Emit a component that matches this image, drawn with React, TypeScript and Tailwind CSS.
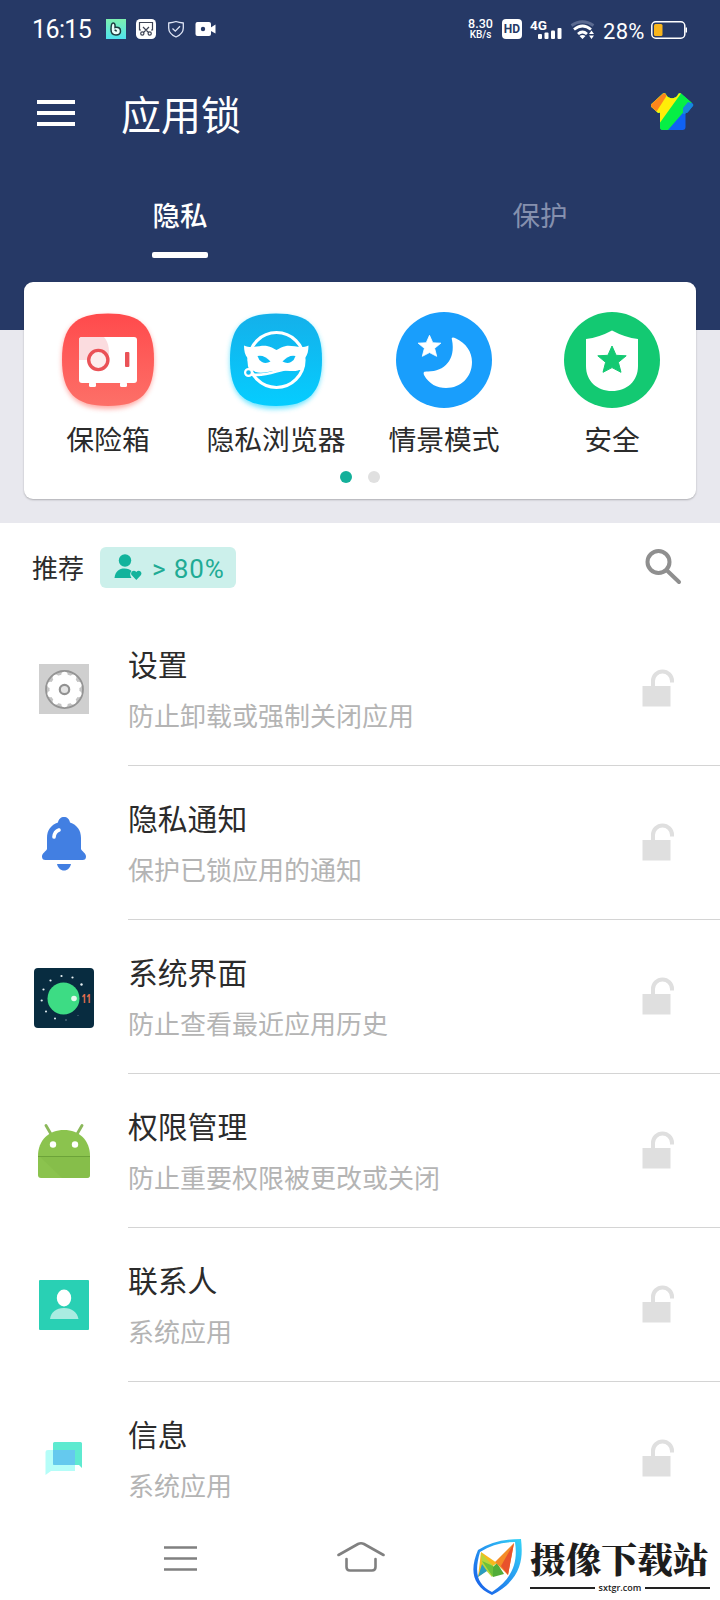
import type { ReactNode } from "react";

interface AppItem {
  title: string;
  desc: string;
  icon: ReactNode;
}

interface Feature {
  label: string;
  icon: ReactNode;
}

const StarShape = ({ fill }: { fill: string }) => (
  <path
    d="M0 -14 L4.1 -4.7 L14.2 -4.2 L6.4 2.3 L9 12.3 L0 7.6 L-9 12.3 L-6.4 2.3 L-14.2 -4.2 L-4.1 -4.7 Z"
    fill={fill}
    stroke={fill}
    strokeWidth="1"
    strokeLinejoin="round"
  />
);

const SafeIcon = () => (
  <svg viewBox="0 0 96 96" className="w-24 h-24 overflow-visible">
    <defs>
      <linearGradient id="safe" x1="0" y1="0" x2="0" y2="1">
        <stop offset="0" stopColor="#ff4a4c" />
        <stop offset="1" stopColor="#fd7068" />
      </linearGradient>
      <filter id="glow" x="-20%" y="-20%" width="140%" height="150%">
        <feGaussianBlur stdDeviation="2.5" />
      </filter>
    </defs>
    <path
      d="M48 4C81 4 94 17 94 49S81 97 48 97S2 82 2 49S15 4 48 4Z"
      fill="#ff8f88"
      opacity="0.75"
      filter="url(#glow)"
    />
    <path d="M48 1.5C81 1.5 94 14.5 94 47.5S81 94 48 94S2 80.5 2 47.5S15 1.5 48 1.5Z" fill="url(#safe)" />
    <rect x="19" y="25" width="58" height="46" rx="3" fill="#fff" />
    <path d="M22 25H44C49 31 50 39 48 48H19V28Q19 25 22 25Z" fill="#fbdcdf" />
    <rect x="29" y="70" width="7" height="5" rx="1.5" fill="#fff" />
    <rect x="60" y="70" width="7" height="5" rx="1.5" fill="#fff" />
    <circle cx="38.3" cy="48" r="9.6" fill="#fdeeee" stroke="#ea5257" strokeWidth="3.4" />
    <rect x="65" y="40" width="4.4" height="15" rx="1" fill="#ea5257" />
  </svg>
);

const MaskIcon = () => (
  <svg viewBox="0 0 96 96" className="w-24 h-24 overflow-visible">
    <defs>
      <linearGradient id="mask" x1="0" y1="0" x2="0" y2="1">
        <stop offset="0" stopColor="#14b0ea" />
        <stop offset="1" stopColor="#05cdff" />
      </linearGradient>
    </defs>
    <path
      d="M48 4C81 4 94 17 94 49S81 97 48 97S2 82 2 49S15 4 48 4Z"
      fill="#3ddcff"
      opacity="0.75"
      filter="url(#glow)"
    />
    <path d="M48 1.5C81 1.5 94 14.5 94 47.5S81 94 48 94S2 80.5 2 47.5S15 1.5 48 1.5Z" fill="url(#mask)" />
    <circle cx="48.5" cy="48" r="27.5" fill="none" stroke="#fff" strokeWidth="3.2" />
    <path
      d="M16 33.5C24 37 32 33 39 34C43 34.5 46 37 48.5 38C51 37 54 34.5 58 34C65 33 73 37 80.5 33.5C80.5 39 79.5 43 77 46C77 52 75 57 70 58.5C64 60 57 58 50 58.500C42 59 34 62 28 60C22 58 20 53 19.500 46C17 43 16 39 16 33.5Z"
      fill="#fff"
    />
    <path d="M29.5 44Q36 42.5 42.5 49.5Q38 52 34 50Q30.500 48 29.5 44Z" fill="#0cbcf4" />
    <path d="M67.500 44Q61 42.5 54.5 49.5Q59 52 63 50Q66.500 48 67.500 44Z" fill="#0cbcf4" />
    <circle cx="20.5" cy="60.5" r="3.4" fill="#0cbcf4" stroke="#fff" strokeWidth="2.2" />
    <path d="M23 62.500Q34 64 48 59.500T74 57" fill="none" stroke="#fff" strokeWidth="2.600" />
  </svg>
);

const MoonIcon = () => (
  <svg viewBox="0 0 96 96" className="w-24 h-24">
    <circle cx="48" cy="48" r="48" fill="#199efc" />
    <path
      d="M56 28C55 25 57 25 60 26.5C70 31 76 40 76 50C76 65 65 76 50 76C41 76 33 72 28 63C27 60 28 59.5 31 59.5C48 60 60 48 56 28Z"
      fill="#fff"
    />
    <g transform="translate(33.5 34.5) scale(0.8)">
      <StarShape fill="#fff" />
    </g>
  </svg>
);

const ShieldStarIcon = () => (
  <svg viewBox="0 0 96 96" className="w-24 h-24">
    <circle cx="48" cy="48" r="48" fill="#13c972" />
    <path d="M48 18.5Q61 25.5 74 27V54C74 69 63 79 48 79S22 69 22 54V27Q35 25.5 48 18.5Z" fill="#fff" />
    <g transform="translate(48 48)">
      <StarShape fill="#13c972" />
    </g>
  </svg>
);

const features: Feature[] = [
  { label: "保险箱", icon: <SafeIcon /> },
  { label: "隐私浏览器", icon: <MaskIcon /> },
  { label: "情景模式", icon: <MoonIcon /> },
  { label: "安全", icon: <ShieldStarIcon /> },
];

const teeth = [0, 36, 72, 108, 144, 180, 216, 252, 288, 324];

const SettingsIcon = () => (
  <svg viewBox="0 0 50 50" className="w-[50px] h-[50px]">
    <rect width="50" height="50" fill="#cfcfcf" />
    <circle cx="25.5" cy="25.5" r="18.5" fill="#c4c4c4" stroke="#949494" strokeWidth="1.8" />
    <circle cx="25.5" cy="25.5" r="15" fill="#fff" />
    {teeth.map((angle) => (
      <circle key={angle} cx="25.5" cy="11" r="3.2" fill="#fff" transform={`rotate(${angle} 25.5 25.5)`} />
    ))}
    <circle cx="25.5" cy="25.5" r="4.7" fill="#e4e4e4" stroke="#929292" strokeWidth="2.2" />
  </svg>
);

const BellIcon = () => (
  <svg viewBox="0 0 46 56" className="mt-[2px] w-[46px] h-14">
    <path
      d="M23 1C26 1 28.5 3 29 6.5C36 9 40 14 40 22V33C41 35.5 45 37 45 40.5Q45 44 41.5 44H4.5Q1 44 1 40.5C1 37 5 35.5 6 33V22C6 14 10 9 17 6.5C17.5 3 20 1 23 1Z"
      fill="#427fe2"
    />
    <path d="M13 21Q13.5 15.5 18 14" fill="none" stroke="#fff" strokeWidth="3.6" strokeLinecap="round" />
    <path d="M16 48H30C29 52 26.5 54.5 23 54.5S17 52 16 48Z" fill="#427fe2" />
  </svg>
);

const SystemIcon = () => (
  <svg viewBox="0 0 60 60" className="mt-px w-[60px] h-[60px]">
    <rect width="60" height="60" rx="4" fill="#082c40" />
    <circle cx="29.5" cy="30.5" r="16" fill="#3ddc84" />
    <circle cx="40" cy="30.5" r="2.8" fill="#e6fbef" />
    <g fill="#e8f1f4">
      <circle cx="16.5" cy="12.5" r="1.1" />
      <circle cx="27.5" cy="8" r="1.1" />
      <circle cx="38.5" cy="9.5" r="1.1" />
      <circle cx="47.5" cy="16.5" r="1.2" />
      <circle cx="9.5" cy="21.5" r="1.1" />
      <circle cx="7.7" cy="32.5" r="1.1" />
      <circle cx="12" cy="43.5" r="1" />
      <circle cx="21" cy="50.5" r="1" />
      <circle cx="32" cy="52" r="0.7" opacity="0.6" />
      <circle cx="44" cy="47.5" r="0.5" opacity="0.5" />
    </g>
    <text
      x="47.5"
      y="34.5"
      fill="#e8714f"
      fontFamily="Open Sans, sans-serif"
      fontWeight="700"
      fontSize="12"
      textLength="9.5"
      lengthAdjust="spacingAndGlyphs"
    >
      11
    </text>
  </svg>
);

const AndroidIcon = () => (
  <svg viewBox="0 0 52 54" className="w-[52px] h-[54px]">
    <path d="M8 1.5L13.5 11M44 1.5L38.5 11" stroke="#8bb85a" strokeWidth="2.8" strokeLinecap="round" />
    <path d="M0 32C0 16 11 6 26 6S52 16 52 32V51Q52 54 49 54H3Q0 54 0 51Z" fill="#8bc34e" />
    <path d="M0 32H52V33H0Z" fill="#6ca339" />
    <path d="M2 33H52V51Q52 54 49 54H24Z" fill="#84bb48" opacity="0.6" />
    <circle cx="15" cy="20.5" r="3.2" fill="#fff" />
    <circle cx="37" cy="20.5" r="3.2" fill="#fff" />
  </svg>
);

const ContactsIcon = () => (
  <svg viewBox="0 0 50 50" className="w-[50px] h-[50px]">
    <rect width="50" height="50" rx="1" fill="#29d0b4" />
    <path d="M11 39C12 32 17 28 25 28S38 32 39.5 39Z" fill="#a9ece1" />
    <ellipse cx="25" cy="18" rx="7.2" ry="8.5" fill="#fff" />
  </svg>
);

const MessageIcon = () => (
  <svg viewBox="0 0 38 34" className="-mt-[3px] w-[38px] h-[34px]">
    <path d="M3 9H30V30H6L0.5 34V11Q0.5 9 3 9Z" fill="#b5fdf8" />
    <path d="M9.5 1H35.5Q37 1 37 2.5V27L34 24H9.5Q8 24 8 22.5V2.5Q8 1 9.5 1Z" fill="#5eead0" />
    <path d="M8 9H30V24H9.5Q8 24 8 22.5Z" fill="#65c9ee" />
  </svg>
);

const apps: AppItem[] = [
  { title: "设置", desc: "防止卸载或强制关闭应用", icon: <SettingsIcon /> },
  { title: "隐私通知", desc: "保护已锁应用的通知", icon: <BellIcon /> },
  { title: "系统界面", desc: "防止查看最近应用历史", icon: <SystemIcon /> },
  { title: "权限管理", desc: "防止重要权限被更改或关闭", icon: <AndroidIcon /> },
  { title: "联系人", desc: "系统应用", icon: <ContactsIcon /> },
  { title: "信息", desc: "系统应用", icon: <MessageIcon /> },
];

const UnlockIcon = () => (
  <svg viewBox="0 0 34 38" className="-mt-[2px] w-[34px] h-[38px] shrink-0">
    <rect x="0.5" y="17" width="28" height="20.5" fill="#dfdfdf" />
    <path d="M11 17V12A9.5 9.5 0 0 1 30 12V13.5" fill="none" stroke="#dfdfdf" strokeWidth="4" />
  </svg>
);

const StatusBar = () => (
  <div className="flex h-[60px] items-start pt-[19px] pl-[32px] text-white font-['Roboto','Noto_Sans_CJK_SC',sans-serif]">
    <span className="mt-px w-[74px] text-[25px] leading-5 tracking-[-0.6px]">16:15</span>
    {/* Notification icons */}
    <svg viewBox="0 0 20 20" className="w-5 h-5">
      <defs>
        <linearGradient id="bgreen" x1="0" y1="0" x2="0" y2="1">
          <stop offset="0" stopColor="#7df0b0" />
          <stop offset="1" stopColor="#4fe3ee" />
        </linearGradient>
      </defs>
      <rect width="20" height="20" fill="url(#bgreen)" />
      <path
        d="M7.2 4C9 4 9.200 6 9 8.500C12 7.500 14.500 9 14.500 12C14.500 14.500 12.500 16 10 16C6.500 16 5 14 5 10.500C5 7 5.300 4 7.200 4Z"
        fill="#e8fffb"
        stroke="#1d3b3d"
        strokeWidth="1.5"
      />
      <path d="M8.500 11.500Q9.500 10.500 10.500 12.500" fill="none" stroke="#1d3b3d" strokeWidth="1.5" />
    </svg>
    <svg viewBox="0 0 20 20" className="ml-[10px] w-5 h-5">
      <rect width="20" height="20" rx="4.5" fill="#fff" />
      <g fill="none" stroke="#3d4354" strokeWidth="1.2">
        <path d="M5 11H3.5V3.5H16.5V11H15M7 8L12.5 13.5M13 8L7.5 13.5" />
        <circle cx="6.3" cy="14.5" r="1.6" />
        <circle cx="13.7" cy="14.5" r="1.6" />
      </g>
    </svg>
    <svg viewBox="0 0 18 18" className="ml-[11px] mt-px w-[18px] h-[18px]" fill="none" stroke="#dfe5f5" strokeWidth="1.3">
      <path d="M9 1.5Q12 2.5 16.3 3V8C16.3 12 13.5 15 9 17C4.5 15 1.7 12 1.7 8V3Q6 2.5 9 1.5Z" />
      <path d="M5.5 8.5L8.3 11.2L13 6.2" />
    </svg>
    <svg viewBox="0 0 20 16" className="ml-[10px] mt-[2px] w-[21px] h-4">
      <rect y="1" width="15.5" height="14" rx="2" fill="#fff" />
      <path d="M14.5 7L20 3.5V12.5L14.5 9.5Z" fill="#fff" />
      <circle cx="7.5" cy="8" r="2.2" fill="#263966" />
    </svg>

    {/* Network and battery */}
    <div className="-mt-px ml-[251px] w-[27px] text-center font-medium">
      <div className="text-[12.5px] leading-[12px]">8.30</div>
      <div className="text-[10px] leading-[10px]">KB/s</div>
    </div>
    <span className="ml-[8px] flex h-5 w-5 items-center justify-center rounded-[4px] bg-white text-[12px] font-bold text-[#263966]">
      HD
    </span>
    <svg viewBox="0 0 32 21" className="ml-[8px] w-8 h-[21px] overflow-visible">
      <text x="0" y="10.5" fill="#fff" fontFamily="Roboto, sans-serif" fontWeight="700" fontSize="13.5">
        4G
      </text>
      <g fill="#fff">
        <rect x="8" y="15" width="4" height="5" rx="1" />
        <rect x="14.500" y="13.5" width="4" height="6.5" rx="1" />
        <rect x="21" y="11.5" width="4" height="8.5" rx="1" />
        <rect x="27.500" y="9" width="4" height="11" rx="1" />
      </g>
    </svg>
    <svg viewBox="0 0 26 20" className="ml-[8px] mt-px w-[26px] h-5">
      <g fill="none" strokeWidth="2.8">
        <path d="M1.5 5.5Q12.5 -2 23.5 5.5" stroke="#5b6a90" />
        <path d="M4 9.500Q12.5 2.5 21 9.500" stroke="#fff" />
        <path d="M8 14Q12.5 10 17 14" stroke="#fff" />
      </g>
      <path d="M9.500 16Q12.5 13.8 15.500 16L12.5 19ZM19 14L21.5 10.5L24 14ZM19 15.5L21.5 19L24 15.5Z" fill="#fff" />
    </svg>
    <span className="ml-[7px] mt-[3px] w-[42px] text-[22px] leading-5 tracking-[0.3px]">28%</span>
    <svg viewBox="0 0 36 18" className="ml-[6px] mt-[2px] w-9 h-[18px]">
      <rect x="0.8" y="0.8" width="33" height="16.4" rx="4" fill="none" stroke="#fff" strokeWidth="1.5" />
      <rect x="3" y="3" width="8.5" height="12" rx="1.5" fill="#f8b51c" />
      <rect x="34.5" y="6.5" width="1.5" height="5" fill="#fff" />
    </svg>
  </div>
);

const ShirtIcon = () => (
  <svg viewBox="0 0 44 40" className="-mt-[2px] w-11 h-10">
    <defs>
      <clipPath id="shirt">
        <path d="M13 1.5Q15 0.5 16 2.5C18 7.5 26 7.5 28 2.5Q29 0.5 31 1.5L42.5 11.5Q44 13 42.5 14.5L38 20Q36.5 21.5 35.5 20.5V35Q35.5 38 32.5 38H13Q10 38 10 35V20.5Q8.5 21.5 7 20L1.5 15Q0.5 13 1.5 12Z" />
      </clipPath>
    </defs>
    <g clipPath="url(#shirt)">
      <rect width="44" height="40" fill="#0f62f4" />
      <path d="M0 0H44V8L14 40H0Z" fill="#06ef45" />
      <path d="M44 8L18 38H9L0 40V0H44Z" fill="#06ef45" />
      <path d="M0 0H32L9 32H0Z" fill="#ffee08" />
      <path d="M0 0H19L5 22H0Z" fill="#fb861c" />
      <path d="M38 10L44 12V22H33V16Z" fill="#1687dc" />
    </g>
  </svg>
);

const Watermark = () => (
  <div className="flex w-[236px] pt-[3px]">
    <svg viewBox="0 0 50 56" className="-ml-px w-[50px] h-14">
      <defs>
        <linearGradient id="wm" x1="1" y1="0" x2="0" y2="1">
          <stop offset="0" stopColor="#35d4f7" />
          <stop offset="1" stopColor="#1757e8" />
        </linearGradient>
      </defs>
      <path
        fillRule="evenodd"
        d="M5 11Q22 0 48 0C50 18 50 40 19 56C-2 46 -3 30 5 11ZM7 13C1 34 4 45 19 53C40 39 45 23 42 3Q22 3 7 13Z"
        fill="url(#wm)"
      />
      <path d="M8 13L24 24L5 38Z" fill="#f8b91d" />
      <path d="M8 14L22 29L19 38L9 27Z" fill="#b9d63b" />
      <path d="M5 38L9 25L14 32Z" fill="#2a9cc0" />
      <path d="M9 22L20 27V38Z" fill="#6cc13b" />
      <path d="M20 38L20 28L24 24L31 35Z" fill="#52ad39" />
      <path d="M22 23L41 4L35 36Z" fill="#f48b27" />
      <path d="M28 27L41 4L35 36Z" fill="#e8522c" />
    </svg>
    <div className="ml-[7px] w-[180px]">
      <div className="-mt-px h-10 whitespace-nowrap text-[35.7px] leading-10 font-black text-[#1d1d1d] font-['Noto_Serif_CJK_SC','Noto_Sans_CJK_SC',serif]">
        摄像下载站
      </div>
      <div className="mt-px flex h-[18px] items-center">
        <span className="h-[2px] w-[65px] bg-[#222]" />
        <span className="-mt-px flex-1 text-center text-[9px] font-semibold leading-[14px] text-[#222] font-['Open_Sans',sans-serif]">
          sxtgr.com
        </span>
        <span className="h-[2px] w-[65px] bg-[#222]" />
      </div>
    </div>
  </div>
);

const App = () => {
  return (
    <div className="h-[1600px] w-[720px] overflow-hidden bg-white text-[#2b2b2b] font-['Noto_Sans_CJK_SC',sans-serif]">
      {/* Header */}
      <header className="h-[330px] bg-[#263966]">
        <StatusBar />
        <div className="flex h-[106px] items-center px-[26px]">
          <button className="ml-[11px] flex w-[38px] flex-col gap-[7px]">
            <span className="h-1 bg-white" />
            <span className="h-1 bg-white" />
            <span className="h-1 bg-white" />
          </button>
          <h1 className="ml-[46px] flex-1 text-[40px] leading-[60px] text-white">应用锁</h1>
          <ShirtIcon />
        </div>
        <div className="grid grid-cols-2 text-[27.5px] leading-[40px]">
          <div className="flex h-[92px] flex-col items-center pt-7">
            <span className="font-medium text-white">隐私</span>
            <span className="mt-[18px] h-[6px] w-14 rounded-[2px] bg-white" />
          </div>
          <div className="pt-7 text-center text-[#8590ae]">保护</div>
        </div>
      </header>

      {/* Feature card */}
      <section className="h-[193px] bg-[#e8e8ee] px-6">
        <div className="relative -top-12 h-[217px] rounded-[9px] bg-white pt-[30px] shadow-[0_1px_2px_rgba(0,0,0,0.25)]">
          <div className="grid grid-cols-4">
            {features.map((feature) => (
              <div key={feature.label} className="flex flex-col items-center">
                {feature.icon}
                <span className="mt-[10px] whitespace-nowrap text-[27.8px] leading-[40px]">{feature.label}</span>
              </div>
            ))}
          </div>
          <div className="mt-[13px] flex justify-center gap-4">
            <span className="h-3 w-3 rounded-full bg-[#14b09a]" />
            <span className="h-3 w-3 rounded-full bg-[#e0e0e0]" />
          </div>
        </div>
      </section>

      {/* Recommended */}
      <div className="flex h-[89px] items-center pl-8 pr-[37px]">
        <span className="-mt-[2px] w-[68px] text-[26px] leading-[40px]">推荐</span>
        <div className="flex h-[41px] w-[136px] items-center rounded-[6px] bg-[#ccf0eb] pl-[14px] text-[#1fab95]">
          <svg viewBox="0 0 28 26" className="-mt-px w-7 h-[26px]" fill="#12b39c">
            <circle cx="11" cy="6.5" r="6.2" />
            <path d="M0.5 24C1.5 17 5 14.5 10.5 14.5C14 14.5 16 15.5 17.5 17C15.5 19 16 22 17.5 24Z" />
            <path d="M22.3 26L17.8 21.3C15.5 18.5 19.5 15 22.3 18C25 15 29 18.5 26.8 21.3Z" />
          </svg>
          <span className="ml-[10px] mt-[2px] whitespace-nowrap text-[26px] leading-[40px] tracking-[0.9px] font-['Roboto','Noto_Sans_CJK_SC',sans-serif]">
            &gt; 80%
          </span>
        </div>
        <svg
          viewBox="0 0 38 38"
          className="ml-auto mr-px -mt-[2px] w-[38px] h-[38px]"
          fill="none"
          stroke="#8f8f8f"
          strokeWidth="4"
        >
          <circle cx="14.5" cy="14" r="11" />
          <path d="M23 22.5L35 34" strokeLinecap="round" />
        </svg>
      </div>

      {/* App list */}
      <ul>
        {apps.map((app, index) => (
          <li key={app.title} className="flex h-[154px]">
            <div className="flex w-32 shrink-0 items-center justify-center">{app.icon}</div>
            <div
              className={
                index === apps.length - 1
                  ? "flex flex-1 items-center justify-between pr-[44px]"
                  : "flex flex-1 items-center justify-between border-b border-[#d4d4d4] pr-[44px]"
              }
            >
              <div>
                <p className="text-[29.8px] leading-[50px]">{app.title}</p>
                <p className="mt-[2px] text-[26px] leading-[50px] text-[#b4b4b4]">{app.desc}</p>
              </div>
              <UnlockIcon />
            </div>
          </li>
        ))}
      </ul>

      {/* Navigation bar */}
      <nav className="flex h-16 items-start pl-[164px]">
        <svg viewBox="0 0 33 26" className="mt-[10px] w-[33px] h-[26px]" stroke="#808080" strokeWidth="2.6">
          <path d="M0 1.5H33M0 12.5H33M0 23.5H33" />
        </svg>
        <svg
          viewBox="0 0 48 32"
          className="ml-[140px] mt-[5px] w-12 h-8"
          fill="none"
          stroke="#808080"
          strokeWidth="2.6"
          strokeLinecap="round"
        >
          <path d="M1.5 14L21 3Q24 1.5 27 3L46.5 14" />
          <path d="M9.5 18V26Q9.5 29.5 13 29.5H35Q38.5 29.5 38.5 26V18" />
        </svg>
        <div className="ml-[89px]">
          <Watermark />
        </div>
      </nav>
    </div>
  );
};

export default App;
